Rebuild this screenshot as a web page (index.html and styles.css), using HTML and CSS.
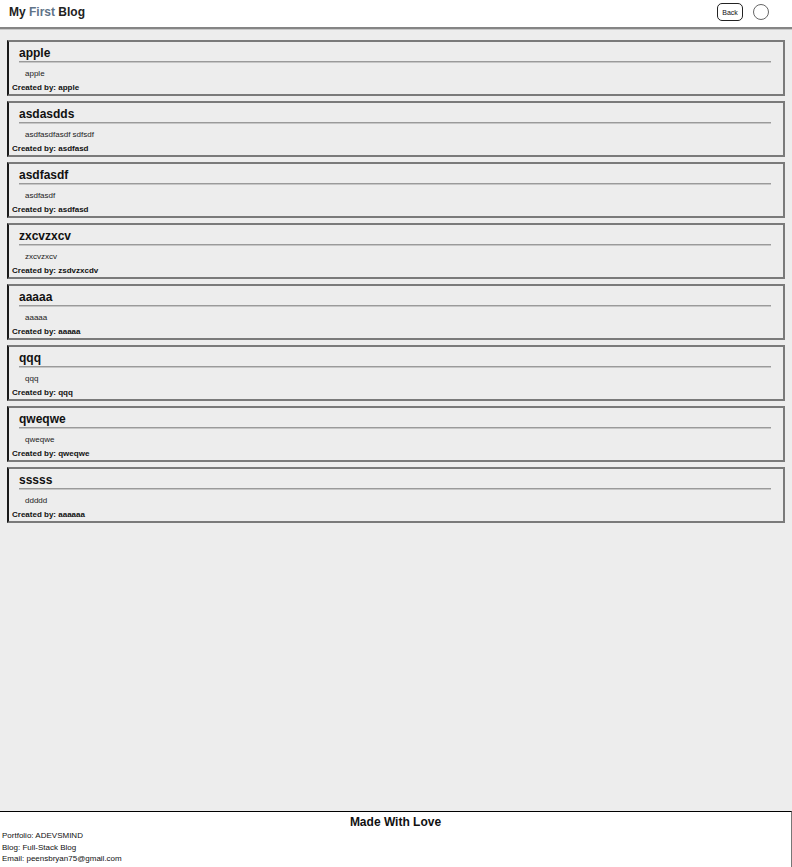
FILE: index.html
```html
<!DOCTYPE html>
<html>
<head>
<meta charset="utf-8">
<link rel="stylesheet" href="styles.css">
</head>
<body>
<header class="topbar">
  <div class="brand">My <span class="accent">First</span> Blog</div>
  <div class="actions">
    <button class="back">Back</button>
    <span class="avatar"></span>
  </div>
</header>
<main class="posts">
  <article class="post"><h2 class="post-title">apple</h2><p class="post-body">apple</p><p class="post-author">Created by: apple</p></article>
  <article class="post"><h2 class="post-title">asdasdds</h2><p class="post-body">asdfasdfasdf sdfsdf</p><p class="post-author">Created by: asdfasd</p></article>
  <article class="post"><h2 class="post-title">asdfasdf</h2><p class="post-body">asdfasdf</p><p class="post-author">Created by: asdfasd</p></article>
  <article class="post"><h2 class="post-title">zxcvzxcv</h2><p class="post-body">zxcvzxcv</p><p class="post-author">Created by: zsdvzxcdv</p></article>
  <article class="post"><h2 class="post-title">aaaaa</h2><p class="post-body">aaaaa</p><p class="post-author">Created by: aaaaa</p></article>
  <article class="post"><h2 class="post-title">qqq</h2><p class="post-body">qqq</p><p class="post-author">Created by: qqq</p></article>
  <article class="post"><h2 class="post-title">qweqwe</h2><p class="post-body">qweqwe</p><p class="post-author">Created by: qweqwe</p></article>
  <article class="post"><h2 class="post-title">sssss</h2><p class="post-body">ddddd</p><p class="post-author">Created by: aaaaaa</p></article>
</main>
<footer class="footer">
  <div class="footer-title">Made With Love</div>
  <div class="footer-line">Portfolio: ADEVSMIND</div>
  <div class="footer-line">Blog: Full-Stack Blog</div>
  <div class="footer-line">Email: peensbryan75@gmail.com</div>
</footer>
</body>
</html>
```
FILE: styles.css
```css
* { box-sizing: border-box; }
html, body { margin: 0; padding: 0; }
body {
  font-family: "Liberation Sans", Arial, sans-serif;
  background: #ededed;
  color: #111;
  min-height: 100vh;
  display: flex;
  flex-direction: column;
}
.topbar {
  height: 29px;
  background: #fff;
  display: flex;
  align-items: center;
  justify-content: space-between;
  padding: 0 23px 3px 9px;
  border-bottom: 2px solid #858585;
  box-shadow: 0 1px 0 #c8c8c8;
}
.brand {
  font-size: 12px;
  font-weight: bold;
  color: #222;
}
.accent { color: #5f7388; }
.actions {
  display: flex;
  align-items: center;
  gap: 10px;
}
.back {
  width: 26px;
  height: 18px;
  padding: 0;
  border: 1px solid #222;
  border-radius: 5px;
  background: #fff;
  font-family: "Liberation Sans", Arial, sans-serif;
  font-size: 7px;
  color: #111;
}
.avatar {
  width: 16px;
  height: 16px;
  border: 1px solid #666;
  border-radius: 50%;
  background: #fff;
}
.posts {
  flex: 1;
  padding: 11px 7px;
  display: flex;
  flex-direction: column;
  gap: 5px;
}
.post {
  border: 2px solid #7a7a7a;
  border-left-color: #1a1a1a;
  height: 56px;
  padding: 3px 0 1px 0;
}
.post-title {
  margin: 0 12px 0 10px;
  font-size: 12px;
  line-height: 16px;
  font-weight: bold;
  color: #111;
  border-bottom: 1px solid #9a9a9a;
  box-shadow: 0 1px 0 #c6c6c6;
}
.post-body {
  margin: 7px 0 0 16px;
  font-size: 8px;
  line-height: 10px;
  color: #222;
}
.post-author {
  margin: 4px 0 0 3px;
  font-size: 8px;
  line-height: 10px;
  font-weight: bold;
  color: #111;
}
.footer {
  height: 56px;
  background: #fff;
  border-top: 1px solid #000;
  border-right: 1px solid #777;
  padding: 3px 2px 0 2px;
}
.footer-title {
  text-align: center;
  font-size: 12px;
  line-height: 14px;
  margin-bottom: 1px;
  font-weight: bold;
  color: #111;
}
.footer-line {
  font-size: 8px;
  line-height: 11.5px;
  color: #111;
}
```
